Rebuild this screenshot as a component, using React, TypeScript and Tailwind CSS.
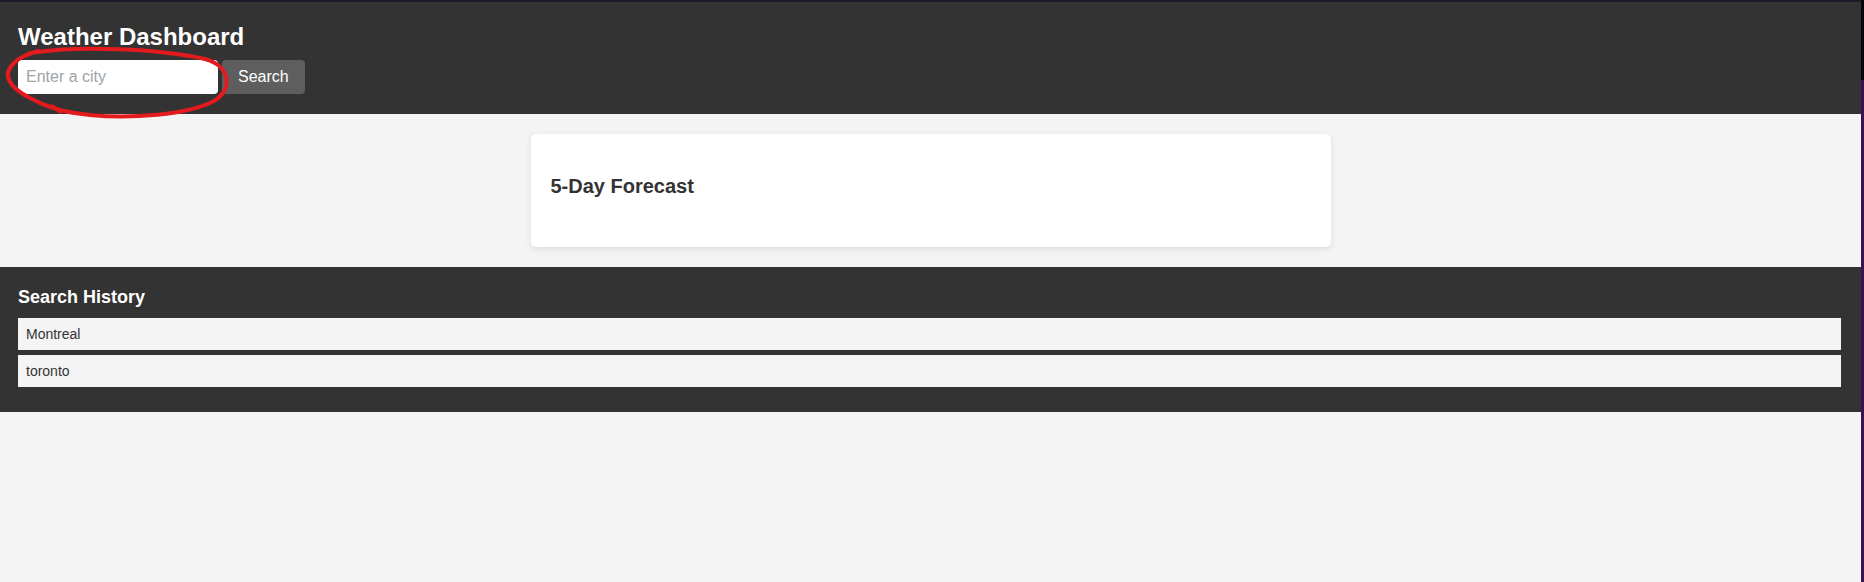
import React from 'react';

const history = ['Montreal', 'toronto'];

export default function App() {
  return (
    <div className="flex min-h-screen w-full bg-[#f4f4f4] font-['Liberation_Sans',Arial,sans-serif]">
      <div className="flex-1 flex flex-col">
        {/* Header */}
        <header className="relative bg-[#333333] border-t-2 border-[#181c28] pt-[21px] pb-[20px] px-[18px]">
          <h1 className="text-[24px] leading-[28px] font-bold text-white">Weather Dashboard</h1>
          <div className="mt-[9px] flex items-center gap-[4px]">
            <input
              type="text"
              placeholder="Enter a city"
              className="w-[200px] h-[34px] rounded-[4px] bg-white px-[8px] text-[16px] text-[#333] placeholder:text-[#a3a3a3] outline-none"
            />
            <button className="h-[34px] px-[16px] rounded-[4px] bg-[#5e5e5e] text-white text-[16px]">Search</button>
          </div>
          {/* hand-drawn red annotation */}
          <svg className="absolute left-0 top-[-2px] pointer-events-none" width="240" height="122" viewBox="0 0 240 122" fill="none">
            <path
              d="M30 53 C80 45, 160 49, 205 59 C231 66, 233 90, 214 101 C188 115, 130 119, 90 115 C62 112, 46 107, 30 98 C10 88, 1 75, 14 63 C20 57, 26 55, 38 51"
              stroke="#e31b1f"
              strokeWidth="4"
              strokeLinecap="round"
            />
            <path d="M52 106 C56 108, 58 110, 60 112" stroke="#e31b1f" strokeWidth="3.5" strokeLinecap="round" />
          </svg>
        </header>

        {/* Forecast */}
        <main className="py-[20px] flex justify-center">
          <section className="w-[800px] h-[113px] bg-white rounded-[5px] shadow-[0_2px_6px_rgba(0,0,0,0.1)] px-[20px] pt-[40px]">
            <h2 className="text-[20px] leading-[24px] font-bold text-[#333]">5-Day Forecast</h2>
          </section>
        </main>

        {/* Search history */}
        <section className="bg-[#333333] pt-[19px] pb-[25px] pl-[18px] pr-[20px]">
          <h2 className="text-[18px] leading-[22px] font-bold text-white">Search History</h2>
          <ul className="mt-[10px] flex flex-col gap-[5px]">
            {history.map((city) => (
              <li key={city} className="h-[32px] bg-[#f4f4f4] pl-[8px] flex items-center text-[14px] text-[#333]">
                {city}
              </li>
            ))}
          </ul>
        </section>
      </div>

      {/* window edge */}
      <div className="w-[3px] flex flex-col">
        <div className="h-[80px] bg-[#0b0410]" />
        <div className="flex-1 bg-[#3d1150]" />
      </div>
    </div>
  );
}
